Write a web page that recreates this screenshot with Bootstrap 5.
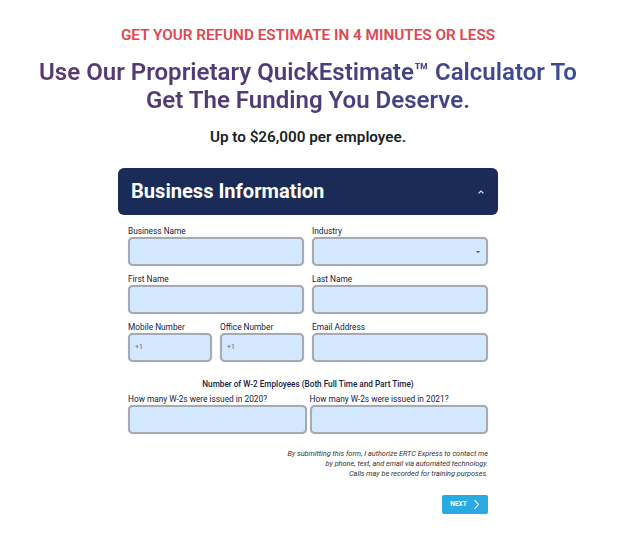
<!DOCTYPE html>
<html lang="en"><head><meta charset="utf-8"><title>Estimate</title>
<link href="https://cdn.jsdelivr.net/npm/bootstrap@5.3.0/dist/css/bootstrap.min.css" rel="stylesheet">
<style>
html,body{height:535px;overflow:hidden;background:#fff}
body{font-family:Roboto,"Liberation Sans",sans-serif;color:#212529}
.pg{width:616px;padding-top:26px}
.kick{color:#e2474f;font-size:15.3px;font-weight:600;line-height:18px;text-align:center;margin:0 0 14px}
.hd{font-size:24.05px;font-weight:600;line-height:28px;text-align:center;margin:0 0 14px;background:linear-gradient(100deg,#5c3a70 0%,#4f3b78 45%,#35509c 100%);-webkit-background-clip:text;background-clip:text;color:transparent}
.sub{font-size:15.25px;font-weight:600;line-height:18px;text-align:center;margin:0 0 22px;color:#1c1f24}
.panel{width:380px;margin:0 auto}
.phead{background:#1a2b58;color:#fff;height:47px;border-radius:6px;padding:0 13px}
.phead h2{font-size:20.1px;font-weight:700;margin:0;line-height:1}
.fbody{padding:12px 10px 0}
.frow{display:flex;gap:8px;margin-bottom:9px}
.frow.tight{gap:3px;margin-bottom:0}
.fld{flex:1 1 0;min-width:0}
.flab{display:block;font-size:8.3px;line-height:9px;margin:0 0 1px;color:#14203f;white-space:nowrap}
.fin{display:flex;align-items:center;height:29px;background:#d3e7fe;border:2px solid #a5abb3;border-radius:5px;padding:0 5px;font-size:7px;color:#5c6670;box-shadow:0 0 1px #a5abb3}
.ctitle{font-size:8.2px;font-weight:500;line-height:10px;text-align:center;margin:17px 0 6px;color:#14203f}
.legal{font-size:7.3px;font-style:italic;line-height:10px;text-align:right;margin:15px 0 16px;color:#333}
.nx{background:#29abe2;color:#fff;width:46px;height:19px;border:0;border-radius:2px;font-size:6.5px;font-weight:700;padding:0;gap:6px}
.nx:hover{background:#29abe2;color:#fff}
</style></head>
<body><div class="pg">
<p class="kick">GET YOUR REFUND ESTIMATE IN 4 MINUTES OR LESS</p>
<h1 class="hd">Use Our Proprietary QuickEstimate™ Calculator To<br>Get The Funding You Deserve.</h1>
<p class="sub">Up to $26,000 per employee.</p>
<div class="panel">
<div class="phead d-flex align-items-center justify-content-between">
<h2>Business Information</h2>
<svg width="8" height="8" viewBox="0 0 8 8" fill="none" stroke="#dfe6f2" stroke-width="1.2"><path d="M1.5 5.4 4 3l2.5 2.4"/></svg>
</div>
<form class="fbody">
<div class="frow"><div class="fld"><label class="flab">Business Name</label><div class="fin"></div></div>
<div class="fld"><label class="flab">Industry</label><div class="fin justify-content-end"><svg width="6" height="4" viewBox="0 0 6 4"><path d="M.8 1h4.4L3 3.2z" fill="#5c6670"/></svg></div></div></div>
<div class="frow"><div class="fld"><label class="flab">First Name</label><div class="fin"></div></div>
<div class="fld"><label class="flab">Last Name</label><div class="fin"></div></div></div>
<div class="frow mb-0"><div class="fld d-flex gap-2"><div class="fld"><label class="flab">Mobile Number</label><div class="fin">+1</div></div><div class="fld"><label class="flab">Office Number</label><div class="fin">+1</div></div></div>
<div class="fld"><label class="flab">Email Address</label><div class="fin"></div></div></div>
<p class="ctitle">Number of W-2 Employees (Both Full Time and Part Time)</p>
<div class="frow tight"><div class="fld"><label class="flab">How many W-2s were issued in 2020?</label><div class="fin"></div></div>
<div class="fld"><label class="flab">How many W-2s were issued in 2021?</label><div class="fin"></div></div></div>
<p class="legal">By submitting this form, I authorize ERTC Express to contact me<br>by phone, text, and email via automated technology.<br>Calls may be recorded for training purposes.</p>
<div class="d-flex justify-content-end"><button type="button" class="btn nx d-flex align-items-center justify-content-center">NEXT<svg width="7" height="11" viewBox="0 0 7 11" fill="none" stroke="#fff" stroke-width="1.1"><path d="M1.5 1l4 4.5-4 4.5"/></svg></button></div>
</form>
</div>
</div>
<script src="https://cdn.jsdelivr.net/npm/bootstrap@5.3.0/dist/js/bootstrap.bundle.min.js"></script>
</body></html>
